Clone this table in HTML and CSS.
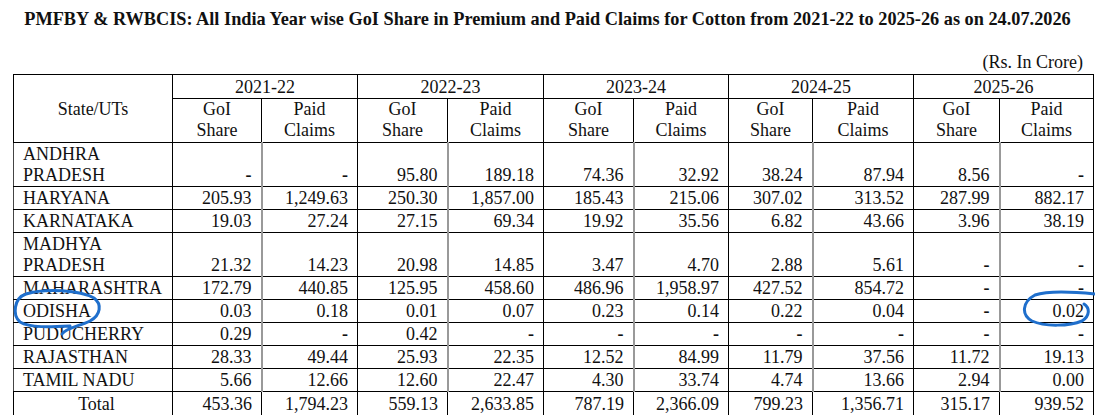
FILE: index.html
```html
<!DOCTYPE html>
<html lang="en">
<head>
<meta charset="utf-8">
<title>PMFBY &amp; RWBCIS Cotton</title>
<link rel="stylesheet" href="styles.css">
</head>
<body>
<div class="page">
  <h1 class="title">PMFBY &amp; RWBCIS: All India Year wise GoI Share in Premium and Paid Claims for Cotton from 2021-22 to 2025-26 as on 24.07.2026</h1>
  <div class="unit">(Rs. In Crore)</div>
  <table class="grid">
    <colgroup>
      <col class="c-state">
      <col class="c89"><col class="c96">
      <col class="c90"><col class="c96">
      <col class="c90"><col class="c95">
      <col class="c84"><col class="c101">
      <col class="c86"><col class="c94">
    </colgroup>
    <thead>
      <tr class="yr">
        <th rowspan="2" class="state-h">State/UTs</th>
        <th colspan="2">2021-22</th>
        <th colspan="2">2022-23</th>
        <th colspan="2">2023-24</th>
        <th colspan="2">2024-25</th>
        <th colspan="2">2025-26</th>
      </tr>
      <tr class="sub">
        <th>GoI<br>Share</th><th>Paid<br>Claims</th>
        <th>GoI<br>Share</th><th>Paid<br>Claims</th>
        <th>GoI<br>Share</th><th>Paid<br>Claims</th>
        <th>GoI<br>Share</th><th>Paid<br>Claims</th>
        <th>GoI<br>Share</th><th>Paid<br>Claims</th>
      </tr>
    </thead>
    <tbody>
      <tr>
        <td class="st">ANDHRA<br>PRADESH</td>
        <td class="g"><span class="dash">-</span></td><td class="p"><span class="dash">-</span></td>
        <td class="g">95.80</td><td class="p">189.18</td>
        <td class="g">74.36</td><td class="p">32.92</td>
        <td class="g">38.24</td><td class="p">87.94</td>
        <td class="g">8.56</td><td class="p"><span class="dash">-</span></td>
      </tr>
      <tr>
        <td class="st">HARYANA</td>
        <td class="g">205.93</td><td class="p">1,249.63</td>
        <td class="g">250.30</td><td class="p">1,857.00</td>
        <td class="g">185.43</td><td class="p">215.06</td>
        <td class="g">307.02</td><td class="p">313.52</td>
        <td class="g">287.99</td><td class="p">882.17</td>
      </tr>
      <tr>
        <td class="st">KARNATAKA</td>
        <td class="g">19.03</td><td class="p">27.24</td>
        <td class="g">27.15</td><td class="p">69.34</td>
        <td class="g">19.92</td><td class="p">35.56</td>
        <td class="g">6.82</td><td class="p">43.66</td>
        <td class="g">3.96</td><td class="p">38.19</td>
      </tr>
      <tr>
        <td class="st">MADHYA<br>PRADESH</td>
        <td class="g">21.32</td><td class="p">14.23</td>
        <td class="g">20.98</td><td class="p">14.85</td>
        <td class="g">3.47</td><td class="p">4.70</td>
        <td class="g">2.88</td><td class="p">5.61</td>
        <td class="g"><span class="dash">-</span></td><td class="p"><span class="dash">-</span></td>
      </tr>
      <tr>
        <td class="st">MAHARASHTRA</td>
        <td class="g">172.79</td><td class="p">440.85</td>
        <td class="g">125.95</td><td class="p">458.60</td>
        <td class="g">486.96</td><td class="p">1,958.97</td>
        <td class="g">427.52</td><td class="p">854.72</td>
        <td class="g"><span class="dash">-</span></td><td class="p"><span class="dash">-</span></td>
      </tr>
      <tr>
        <td class="st">ODISHA</td>
        <td class="g">0.03</td><td class="p">0.18</td>
        <td class="g">0.01</td><td class="p">0.07</td>
        <td class="g">0.23</td><td class="p">0.14</td>
        <td class="g">0.22</td><td class="p">0.04</td>
        <td class="g"><span class="dash">-</span></td><td class="p">0.02</td>
      </tr>
      <tr>
        <td class="st">PUDUCHERRY</td>
        <td class="g">0.29</td><td class="p"><span class="dash">-</span></td>
        <td class="g">0.42</td><td class="p"><span class="dash">-</span></td>
        <td class="g"><span class="dash">-</span></td><td class="p"><span class="dash">-</span></td>
        <td class="g"><span class="dash">-</span></td><td class="p"><span class="dash">-</span></td>
        <td class="g"><span class="dash">-</span></td><td class="p"><span class="dash">-</span></td>
      </tr>
      <tr>
        <td class="st">RAJASTHAN</td>
        <td class="g">28.33</td><td class="p">49.44</td>
        <td class="g">25.93</td><td class="p">22.35</td>
        <td class="g">12.52</td><td class="p">84.99</td>
        <td class="g">11.79</td><td class="p">37.56</td>
        <td class="g">11.72</td><td class="p">19.13</td>
      </tr>
      <tr>
        <td class="st">TAMIL NADU</td>
        <td class="g">5.66</td><td class="p">12.66</td>
        <td class="g">12.60</td><td class="p">22.47</td>
        <td class="g">4.30</td><td class="p">33.74</td>
        <td class="g">4.74</td><td class="p">13.66</td>
        <td class="g">2.94</td><td class="p">0.00</td>
      </tr>
      <tr class="total">
        <td class="st tot">Total</td>
        <td class="g">453.36</td><td class="p">1,794.23</td>
        <td class="g">559.13</td><td class="p">2,633.85</td>
        <td class="g">787.19</td><td class="p">2,366.09</td>
        <td class="g">799.23</td><td class="p">1,356.71</td>
        <td class="g">315.17</td><td class="p">939.52</td>
      </tr>
    </tbody>
  </table>
  <svg class="pen" width="1095" height="415" viewBox="0 0 1095 415" aria-hidden="true">
    <path d="M62 334 C66 328 80 326 90 321 C101 315 102 304 94 298 C80 290 45 288 26 294 C14 298 12 315 20 322 C30 328 50 327 70 326" />
    <path d="M1095 294 C1075 292 1050 290 1035 295 C1022 302 1021 315 1032 321 C1045 327 1070 326 1082 321 C1090 316 1090 308 1084 304" />
  </svg>
</div>
</body>
</html>
```

FILE: styles.css
```css
html, body {
  margin: 0;
  padding: 0;
  background: #ffffff;
}

.page {
  position: relative;
  width: 1095px;
  height: 415px;
  overflow: hidden;
  font-family: "Liberation Serif", "Times New Roman", serif;
  color: #111;
}

.title {
  margin: 0;
  padding-top: 8px;
  font-size: 18.3px;
  line-height: 22px;
  font-weight: bold;
  text-align: center;
  white-space: nowrap;
}

.unit {
  margin-top: 22px;
  padding-right: 12px;
  font-size: 18px;
  line-height: 20px;
  text-align: right;
}

.grid {
  margin: 2px 0 0 13px;
  border-collapse: collapse;
  table-layout: fixed;
  width: 1081px;
  font-size: 18px;
  border: 1.5px solid #000;
}

.c-state { width: 159px; }
.c84 { width: 84px; }
.c86 { width: 86px; }
.c89 { width: 89px; }
.c90 { width: 90px; }
.c94 { width: 94px; }
.c95 { width: 95px; }
.c96 { width: 96px; }
.c101 { width: 101px; }

.grid th {
  font-weight: normal;
  text-align: center;
  border: 1px solid #000;
  padding: 0 4px;
}

.yr th {
  line-height: 22px;
  padding-top: 1px;
}

.sub th {
  line-height: 21px;
  padding-bottom: 1px;
}

.state-h {
  vertical-align: middle;
}

.grid td {
  border-top: 1px solid #000;
  border-bottom: 1px solid #000;
  line-height: 21px;
  padding: 1px 9px 0 9px;
  text-align: right;
  vertical-align: bottom;
  white-space: nowrap;
}

.grid td.st {
  text-align: left;
  padding-right: 2px;
  border-left: 1.5px solid #444;
  border-right: 1px solid #000;
}

.grid td.g {
  border-right: 2px solid #999;
}

.grid td.p {
  border-right: 1px solid #000;
}

.dash {
  font-weight: bold;
}

.total td {
  border-top: 1.5px solid #000;
  line-height: 23px;
}

.grid td.tot {
  text-align: center;
  border-left: 1.5px solid #000;
}

.total td.g {
  border-right: 1px solid #000;
}

.pen {
  position: absolute;
  left: 0;
  top: 0;
  pointer-events: none;
}

.pen path {
  fill: none;
  stroke: #1f6fcc;
  stroke-width: 3;
  stroke-linecap: round;
  stroke-linejoin: round;
}
```
